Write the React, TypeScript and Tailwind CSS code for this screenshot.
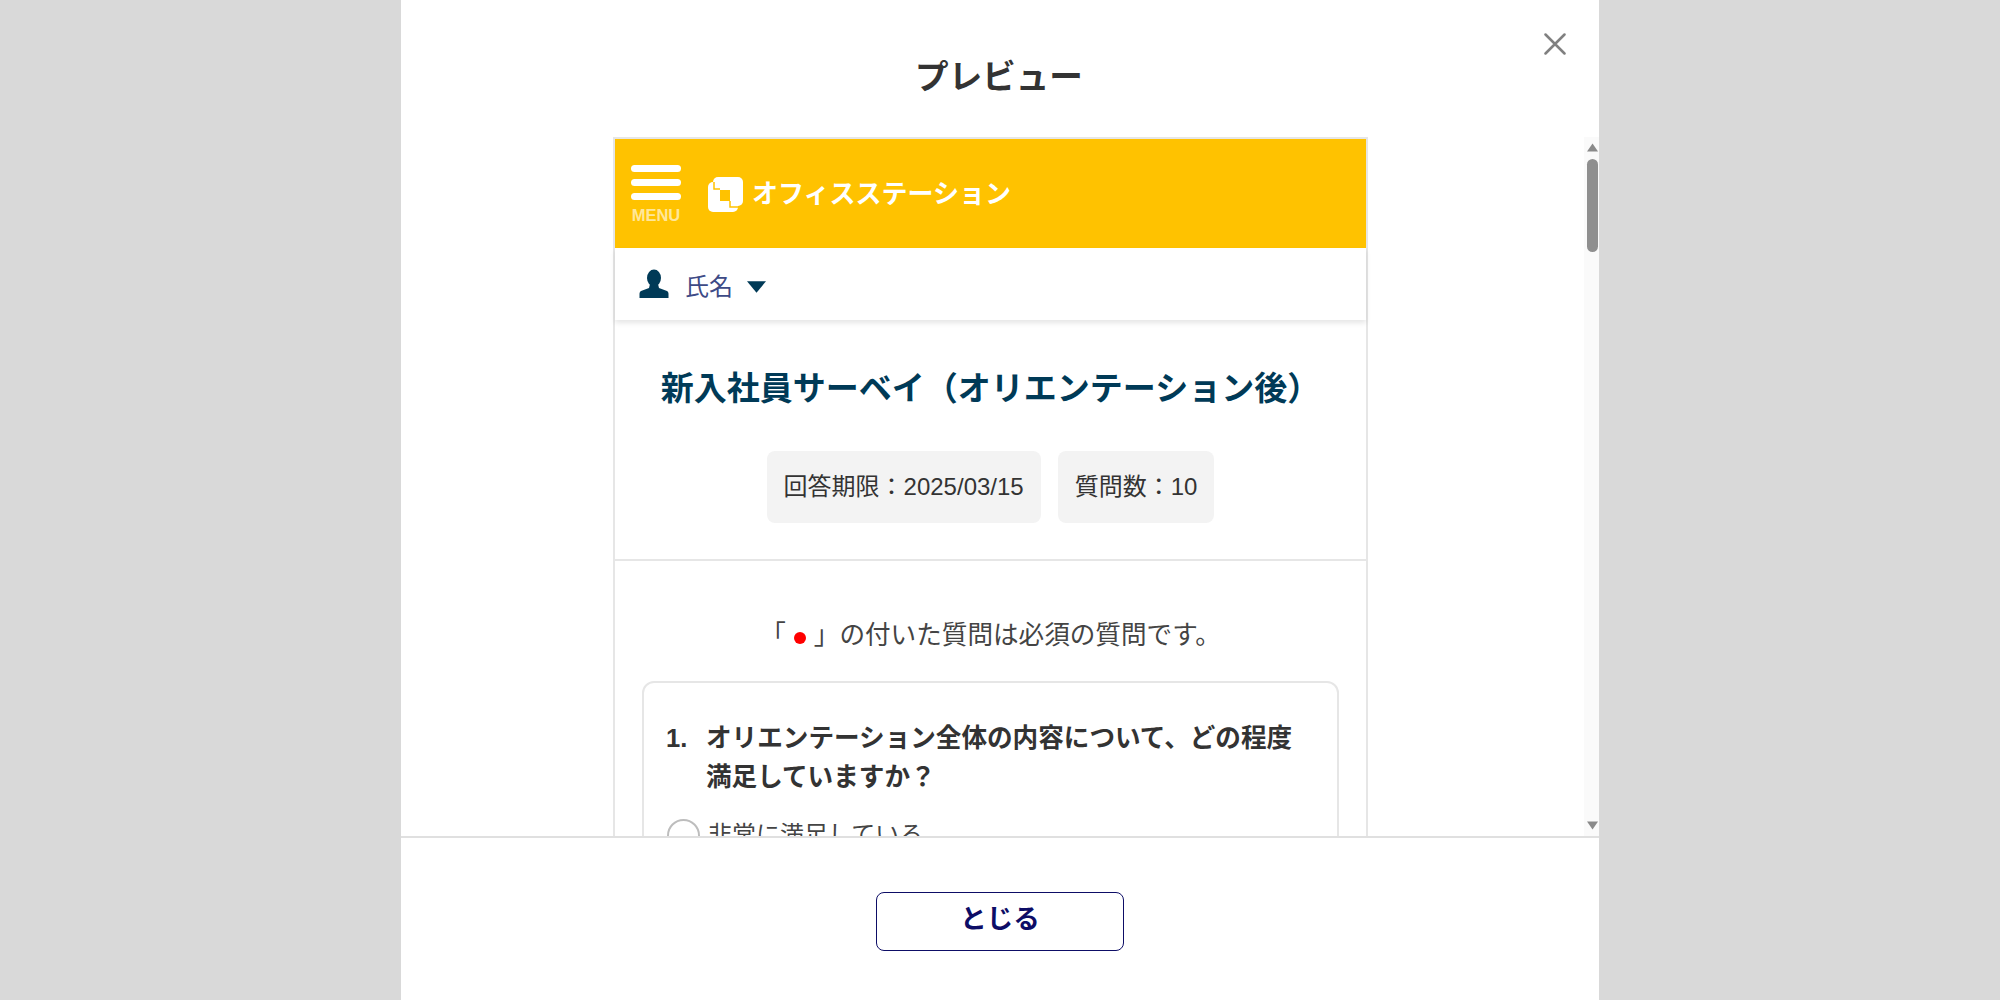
import React from "react";

const font = { fontFamily: '"Liberation Sans", "Noto Sans CJK JP", sans-serif' };

const LogoMark = () => (
  <svg width="36" height="36" viewBox="0 0 36 36">
    <rect x="6" y="1" width="30" height="29" rx="5" fill="#fff" />
    <rect x="1" y="6" width="30" height="30" rx="5" fill="#fff" />
    <path d="M13 14h10v11H13Z" fill="#ffc200" />
    <path d="M7 6v7h6M23 25v6h8" fill="none" stroke="#ffc200" strokeWidth="1.500" />
  </svg>
);

const UserIcon = () => (
  <svg width="30" height="30" viewBox="0 0 30 30" fill="#003a57">
    <ellipse cx="15" cy="9" rx="7" ry="8.5" />
    <path d="M11 15h8l1 4 8 3c1 .5 1.500 1.500 1.500 3v4H.5v-4c0-1.500.5-2.500 1.500-3l8-3 1-4Z" />
  </svg>
);

const ScrollBar = () => (
  <div className="absolute right-0 top-0 bottom-0 w-[15px] bg-[#fafafa]">
    <svg className="absolute left-[3px] top-[6px]" width="11" height="9" viewBox="0 0 11 9">
      <path d="M5.500 0.500 11 8.500H0Z" fill="#8a8a8a" />
    </svg>
    <div className="absolute left-[3px] top-[22px] w-[11px] h-[93px] rounded-full bg-[#8f8f8f]" />
    <svg className="absolute left-[3px] bottom-[6px]" width="11" height="9" viewBox="0 0 11 9">
      <path d="M0 0.500H11L5.500 8.500Z" fill="#8a8a8a" />
    </svg>
  </div>
);

export default function App() {
  return (
    <div className="h-screen flex justify-center bg-[#d9d9d9] overflow-hidden" style={font}>
      <div className="relative w-[1198px] h-full bg-white flex flex-col">
        <button className="absolute right-[33px] top-[33px] w-[22px] h-[22px] text-[#808080]">
          <svg width="22" height="22" viewBox="0 0 22 22" stroke="currentColor" strokeWidth="2.500" strokeLinecap="round">
            <path d="M1.500 1.500 20.500 20.500M20.500 1.500 1.500 20.500" />
          </svg>
        </button>

        <div className="h-[137px] shrink-0 flex justify-center pt-[55px]">
          <h1 className="text-[33.6px] leading-[46px] font-bold text-[#333] -translate-x-px">プレビュー</h1>
        </div>

        <div className="relative flex-1 min-h-0 overflow-hidden">
          <div className="w-[755px] ml-[212px] border-x-2 border-t-2 border-[#e6e6e6] h-[760px]">
            <div className="h-[109px] bg-[#ffc200] flex items-center pl-[15px]">
              <div className="w-[52px] flex flex-col items-center">
                <div className="w-[50px] h-[7px] rounded-full bg-white" />
                <div className="w-[50px] h-[7px] rounded-full bg-white mt-[7px]" />
                <div className="w-[50px] h-[7px] rounded-full bg-white mt-[7px]" />
                <span className="text-[16.5px] leading-[16px] font-bold text-[#ffe79a] mt-[7px]">MENU</span>
              </div>
              <div className="ml-[25px] flex items-center">
                <LogoMark />
                <span className="ml-[9px] text-[26px] leading-[36px] font-bold text-white">オフィスステーション</span>
              </div>
            </div>

            <div className="h-[72px] flex items-center pl-[24px] shadow-[0_3px_5px_rgba(0,0,0,0.1)]">
              <UserIcon />
              <span className="ml-[16px] text-[24px] mt-[6px] text-[#3d4a86]">氏名</span>
              <svg className="ml-[14px] mt-[6px]" width="19" height="12" viewBox="0 0 20 12">
                <path d="M0 0h20L10 12Z" fill="#003a57" />
              </svg>
            </div>

            <div className="pt-[47px] flex flex-col items-center">
              <h2 className="text-[33px] leading-[44px] font-bold text-[#003a57] whitespace-nowrap">新入社員サーベイ（オリエンテーション後）</h2>
              <div className="mt-[40px] flex gap-[17px]">
                <div className="h-[72px] px-[17px] flex items-center rounded-[8px] bg-[#f3f3f3] text-[24px] text-[#333]">回答期限：2025/03/15</div>
                <div className="h-[72px] px-[17px] flex items-center rounded-[8px] bg-[#f3f3f3] text-[24px] text-[#333]">質問数：10</div>
              </div>
            </div>

            <div className="mt-[36px] border-t-2 border-[#e6e6e6] pt-[56px] px-[27px]">
              <p className="text-center text-[25.6px] leading-[36px] text-[#444]">
                「<span className="inline-block w-[12px] h-[12px] mx-[8px] rounded-full bg-[#ff0000] align-[0px]" />」の付いた質問は必須の質問です。
              </p>
              <div className="mt-[28px] border-2 border-[#e6e6e6] rounded-[12px] px-[22px] pt-[36px]">
                <div className="flex text-[25.6px] leading-[39px] font-bold text-[#333]">
                  <span className="w-[40px] shrink-0">1.</span>
                  <span>オリエンテーション全体の内容について、どの程度満足していますか？</span>
                </div>
                <label className="flex items-center mt-[20px] ml-px">
                  <span className="w-[33px] h-[33px] rounded-full border-2 border-[#bdbdbd]" />
                  <span className="ml-[8px] text-[24px] text-[#444]">非常に満足している</span>
                </label>
              </div>
            </div>
          </div>
          <ScrollBar />
        </div>

        <div className="h-[164px] shrink-0 border-t-2 border-[#e0e0e0] bg-white flex justify-center pt-[54px]">
          <button className="w-[248px] h-[59px] rounded-[8px] border border-[#0d0d66] bg-white text-[26.5px] font-bold text-[#0d0d66] pb-[3px]">とじる</button>
        </div>
      </div>
    </div>
  );
}
